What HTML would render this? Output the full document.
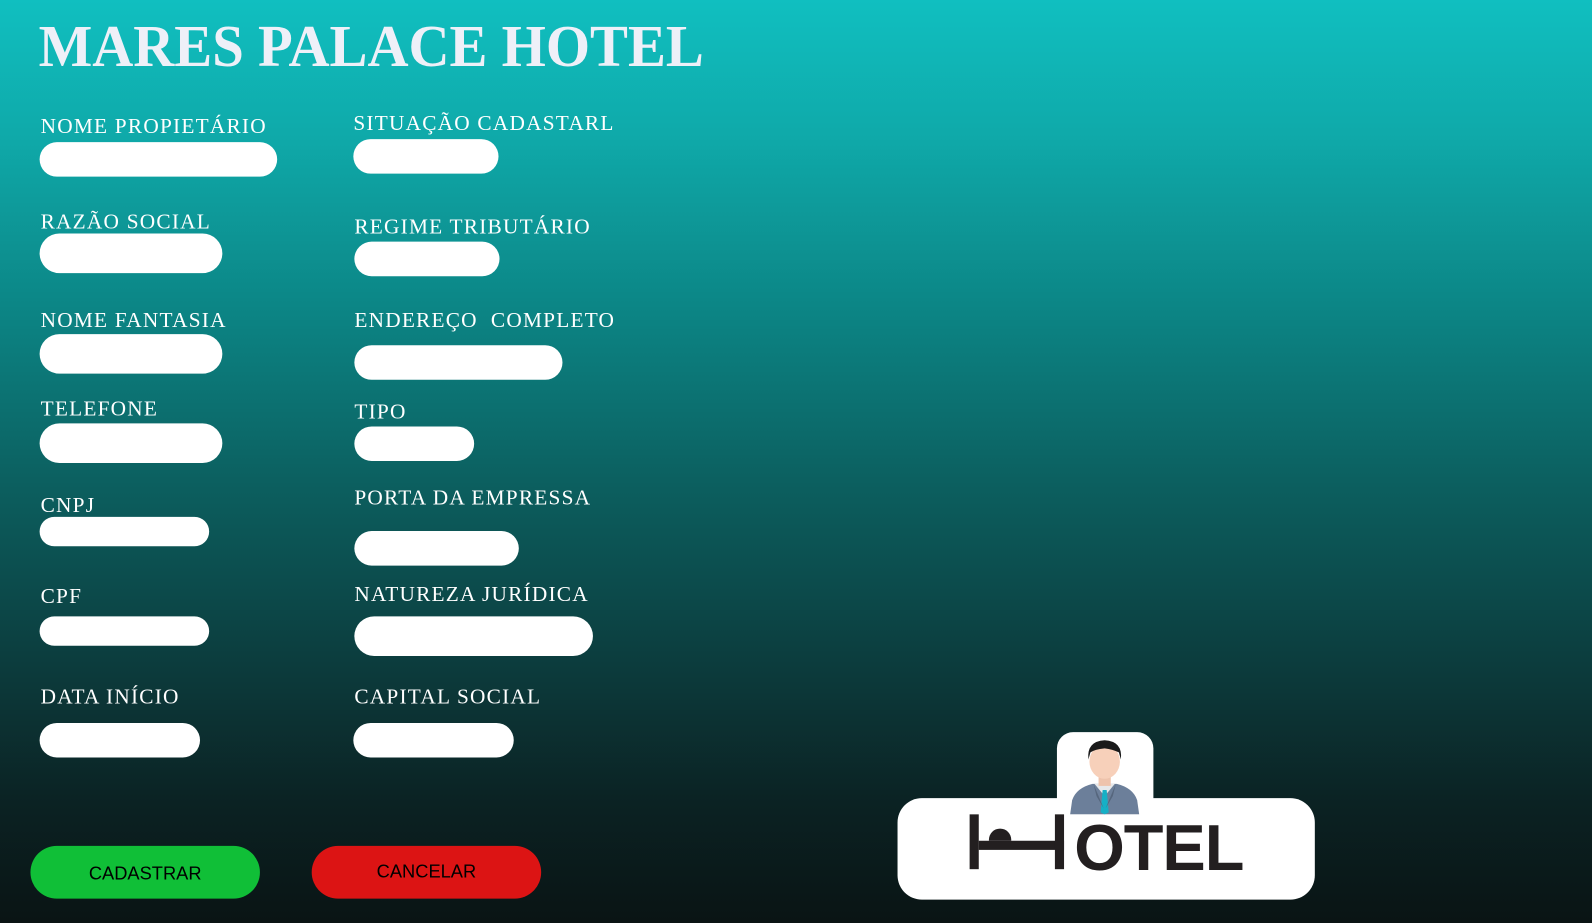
<!DOCTYPE html>
<html><head><meta charset="utf-8"><style>
html,body{margin:0;padding:0;width:1592px;height:923px;overflow:hidden;background:#0a1212}
#w{position:absolute;left:0;top:0;width:1568px;height:909px;transform:scale(1.01531,1.01540);transform-origin:0 0;
background:linear-gradient(180deg,#10bfc0 0%,#0fa9a9 15%,#0c8686 33%,#0c6060 52%,#0c3c3d 72%,#0b2223 87%,#0a1414 100%);}
.t{position:absolute;left:38px;top:12px;font-family:"Liberation Serif",serif;font-weight:bold;font-size:58px;color:#eef0f8;letter-spacing:0px;transform:scaleX(0.965);transform-origin:0 0;white-space:nowrap}
.l{position:absolute;font-family:"Liberation Serif",serif;font-size:21px;color:#fff;letter-spacing:1.2px;white-space:nowrap;margin-top:2px}
.i{position:absolute;background:#fff;border-radius:18px}
.b{position:absolute;border-radius:27px;font-family:"Liberation Sans",sans-serif;font-size:18px;color:#000;text-align:center}
</style></head><body><div id="w">
<div class="t">MARES PALACE HOTEL</div>

<div class="l" style="left:40px;top:110px">NOME PROPIETÁRIO</div><div class="i" style="left:39px;top:140px;width:234px;height:34px"></div>
<div class="l" style="left:40px;top:204px">RAZÃO SOCIAL</div><div class="i" style="left:39px;top:230px;width:180px;height:39px;border-radius:20px"></div>
<div class="l" style="left:40px;top:301px">NOME FANTASIA</div><div class="i" style="left:39px;top:329px;width:180px;height:39px;border-radius:20px"></div>
<div class="l" style="left:40px;top:388px">TELEFONE</div><div class="i" style="left:39px;top:417px;width:180px;height:39px;border-radius:20px"></div>
<div class="l" style="left:40px;top:483px">CNPJ</div><div class="i" style="left:39px;top:509px;width:167px;height:29px;border-radius:15px"></div>
<div class="l" style="left:40px;top:573px">CPF</div><div class="i" style="left:39px;top:607px;width:167px;height:29px;border-radius:15px"></div>
<div class="l" style="left:40px;top:672px">DATA INÍCIO</div><div class="i" style="left:39px;top:712px;width:158px;height:34px"></div>

<div class="l" style="left:348px;top:107px">SITUAÇÃO CADASTARL</div><div class="i" style="left:348px;top:137px;width:143px;height:34px"></div>
<div class="l" style="left:349px;top:209px">REGIME TRIBUTÁRIO</div><div class="i" style="left:349px;top:238px;width:143px;height:34px"></div>
<div class="l" style="left:349px;top:301px">ENDEREÇO&nbsp; COMPLETO</div><div class="i" style="left:349px;top:340px;width:205px;height:34px"></div>
<div class="l" style="left:349px;top:391px">TIPO</div><div class="i" style="left:349px;top:420px;width:118px;height:34px"></div>
<div class="l" style="left:349px;top:476px">PORTA DA EMPRESSA</div><div class="i" style="left:349px;top:523px;width:162px;height:34px"></div>
<div class="l" style="left:349px;top:571px">NATUREZA JURÍDICA</div><div class="i" style="left:349px;top:607px;width:235px;height:39px;border-radius:20px"></div>
<div class="l" style="left:349px;top:672px">CAPITAL SOCIAL</div><div class="i" style="left:348px;top:712px;width:158px;height:34px"></div>

<div class="b" style="left:30px;top:833px;width:226px;height:52px;line-height:54px;background:#10bf37">CADASTRAR</div>
<div class="b" style="left:307px;top:833px;width:226px;height:52px;line-height:50px;background:#dc1414">CANCELAR</div>

<div style="position:absolute;left:1041px;top:721px;width:95px;height:90px;background:#fff;border-radius:16px"></div>
<div style="position:absolute;left:884px;top:786px;width:411px;height:100px;background:#fff;border-radius:24px"></div>
<svg style="position:absolute;left:1050px;top:726px" width="76" height="76" viewBox="0 0 76 76">
<path d="M4 76 L6 62 Q10 50 26 46 L50 46 Q66 50 70 62 L72 76 Z" fill="#6c7f9a"/>
<path d="M28 46 L38 58 L48 46 Z" fill="#e6e8ea"/>
<path d="M36 52 L40 52 L42 74 L38 76 L34 74 Z" fill="#16b0c6"/>
<path d="M27 46 L37 70 L30 58 Z M49 46 L39 70 L46 58 Z" fill="#56667d"/>
<rect x="32" y="36" width="12" height="12" fill="#eec3ac"/>
<ellipse cx="38" cy="24" rx="15" ry="17" fill="#f7d0ba"/>
<path d="M22 22 Q20 4 38 3 Q56 4 54 22 L52 15 Q46 12 38 11 Q28 12 24 15 Z" fill="#1a1a1a"/>
</svg>
<div style="position:absolute;left:955px;top:802px;width:9px;height:54px;background:#231f20"></div>
<div style="position:absolute;left:964px;top:828px;width:84px;height:9px;background:#231f20"></div>
<div style="position:absolute;left:974px;top:816px;width:22px;height:12px;background:#231f20;border-radius:12px 12px 0 0"></div>
<div style="position:absolute;left:1039px;top:802px;width:9px;height:54px;background:#231f20"></div>
<div style="position:absolute;left:1058px;top:806px;font-family:'Liberation Sans',sans-serif;font-weight:bold;font-size:64px;line-height:58px;color:#231f20;letter-spacing:-1px">OTEL</div>
</div></body></html>
